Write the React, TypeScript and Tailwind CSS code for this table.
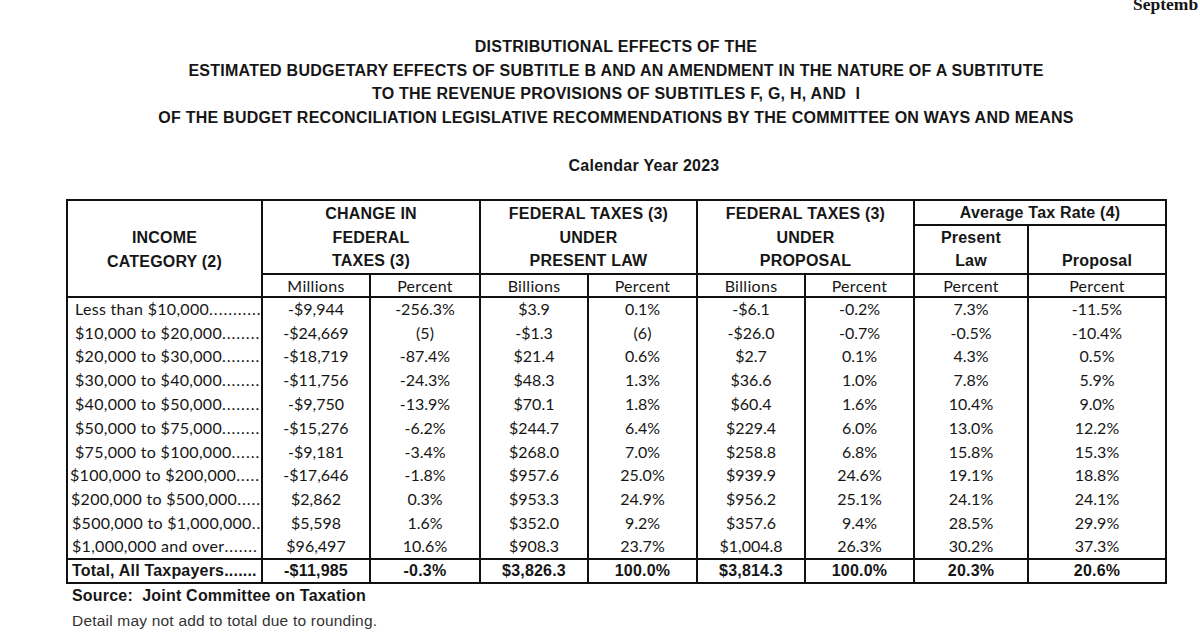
import React from 'react'

const rows: { label: string; dots: string; indent: string; cells: string[] }[] = [
  { label: 'Less than $10,000', dots: '...........', indent: 'pl-[7px]', cells: ['-$9,944', '-256.3%', '$3.9', '0.1%', '-$6.1', '-0.2%', '7.3%', '-11.5%'] },
  { label: '$10,000 to $20,000', dots: '........', indent: 'pl-[7px]', cells: ['-$24,669', '(5)', '-$1.3', '(6)', '-$26.0', '-0.7%', '-0.5%', '-10.4%'] },
  { label: '$20,000 to $30,000', dots: '........', indent: 'pl-[7px]', cells: ['-$18,719', '-87.4%', '$21.4', '0.6%', '$2.7', '0.1%', '4.3%', '0.5%'] },
  { label: '$30,000 to $40,000', dots: '........', indent: 'pl-[7px]', cells: ['-$11,756', '-24.3%', '$48.3', '1.3%', '$36.6', '1.0%', '7.8%', '5.9%'] },
  { label: '$40,000 to $50,000', dots: '........', indent: 'pl-[7px]', cells: ['-$9,750', '-13.9%', '$70.1', '1.8%', '$60.4', '1.6%', '10.4%', '9.0%'] },
  { label: '$50,000 to $75,000', dots: '........', indent: 'pl-[7px]', cells: ['-$15,276', '-6.2%', '$244.7', '6.4%', '$229.4', '6.0%', '13.0%', '12.2%'] },
  { label: '$75,000 to $100,000', dots: '......', indent: 'pl-[7px]', cells: ['-$9,181', '-3.4%', '$268.0', '7.0%', '$258.8', '6.8%', '15.8%', '15.3%'] },
  { label: '$100,000 to $200,000', dots: '.....', indent: 'pl-[2px]', cells: ['-$17,646', '-1.8%', '$957.6', '25.0%', '$939.9', '24.6%', '19.1%', '18.8%'] },
  { label: '$200,000 to $500,000', dots: '.....', indent: 'pl-[3px]', cells: ['$2,862', '0.3%', '$953.3', '24.9%', '$956.2', '25.1%', '24.1%', '24.1%'] },
  { label: '$500,000 to $1,000,000', dots: '..', indent: 'pl-[4px]', cells: ['$5,598', '1.6%', '$352.0', '9.2%', '$357.6', '9.4%', '28.5%', '29.9%'] },
  { label: '$1,000,000 and over', dots: '.......', indent: 'pl-[4px]', cells: ['$96,497', '10.6%', '$908.3', '23.7%', '$1,004.8', '26.3%', '30.2%', '37.3%'] },
]

const total = ['-$11,985', '-0.3%', '$3,826.3', '100.0%', '$3,814.3', '100.0%', '20.3%', '20.6%']

const subHeads = ['Millions', 'Percent', 'Billions', 'Percent', 'Billions', 'Percent', 'Percent', 'Percent']

export default function App() {
  return (
    <div className="w-[1200px] h-[637px] overflow-hidden bg-white text-[#161616] font-['Liberation_Sans',Arial,sans-serif]">
      <div className="h-[12px] pl-[1133px] -mt-[5px] whitespace-nowrap font-['Liberation_Serif',serif] font-bold text-[17.5px] leading-[18px]">
        Septemb
      </div>

      <div className="pl-[32px] pt-[28px] text-center font-bold text-[16px] leading-[23.6px] tracking-[0.25px]">
        <div>DISTRIBUTIONAL EFFECTS OF THE</div>
        <div>ESTIMATED BUDGETARY EFFECTS OF SUBTITLE B AND AN AMENDMENT IN THE NATURE OF A SUBTITUTE</div>
        <div>TO THE REVENUE PROVISIONS OF SUBTITLES F, G, H, AND&nbsp; I</div>
        <div>OF THE BUDGET RECONCILIATION LEGISLATIVE RECOMMENDATIONS BY THE COMMITTEE ON WAYS AND MEANS</div>
      </div>

      <div className="pl-[88px] pt-[25px] text-center font-bold text-[16px] leading-[24px] tracking-[0.25px]">
        Calendar Year 2023
      </div>

      <table className="ml-[66px] mt-[21px] w-[1099px] table-fixed border-collapse">
        <colgroup>
          <col className="w-[195px]" />
          <col className="w-[108px]" />
          <col className="w-[110px]" />
          <col className="w-[108px]" />
          <col className="w-[109px]" />
          <col className="w-[108px]" />
          <col className="w-[109px]" />
          <col className="w-[114px]" />
          <col className="w-[138px]" />
        </colgroup>
        <thead className="font-bold text-[16px] tracking-[0.2px]">
          <tr className="h-[23px]">
            <th rowSpan={3} className="border-2 border-[#111] align-middle font-bold leading-[23.5px] pt-[2px]">
              INCOME
              <br />
              CATEGORY (2)
            </th>
            <th rowSpan={2} colSpan={2} className="border-2 border-[#111] align-top font-bold leading-[23.5px] pt-[1px]">
              CHANGE IN
              <br />
              FEDERAL
              <br />
              TAXES (3)
            </th>
            <th rowSpan={2} colSpan={2} className="border-2 border-[#111] align-top font-bold leading-[23.5px] pt-[1px]">
              FEDERAL TAXES (3)
              <br />
              UNDER
              <br />
              PRESENT LAW
            </th>
            <th rowSpan={2} colSpan={2} className="border-2 border-[#111] align-top font-bold leading-[23.5px] pt-[1px]">
              FEDERAL TAXES (3)
              <br />
              UNDER
              <br />
              PROPOSAL
            </th>
            <th colSpan={2} className="border-2 border-[#111] align-middle font-bold leading-[21px] pt-[1px]">
              Average Tax Rate (4)
            </th>
          </tr>
          <tr className="h-[49px]">
            <th className="border-2 border-[#111] align-top font-bold leading-[23.5px]">
              Present
              <br />
              Law
            </th>
            <th className="border-2 border-[#111] align-bottom font-bold leading-[23.5px]">Proposal</th>
          </tr>
          <tr className="h-[23px] font-['Lato',sans-serif] font-normal text-[16px] tracking-[0.3px]">
            {subHeads.map((s, i) => (
              <th key={i} className="border-2 border-[#111] font-normal leading-[19px]">
                {s}
              </th>
            ))}
          </tr>
        </thead>
        <tbody className="font-['Lato',sans-serif] text-[16px]">
          {rows.map((r) => (
            <tr key={r.label} className="h-[23.8px]">
              <td className={`border-x-2 border-[#111] ${r.indent} whitespace-nowrap overflow-hidden leading-[20px] tracking-[0.3px]`}>
                {r.label}
                <span className="tracking-[1px]">{r.dots}</span>
              </td>
              {r.cells.map((c, i) => (
                <td key={i} className="border-x-2 border-[#111] text-center leading-[20px]">
                  {c}
                </td>
              ))}
            </tr>
          ))}
          <tr className="h-[24px] font-['Liberation_Sans',Arial,sans-serif] font-bold text-[16px] tracking-[0.2px]">
            <td className="border-2 border-[#111] pl-[4px] whitespace-nowrap overflow-hidden leading-[20px]">Total, All Taxpayers.......</td>
            {total.map((c, i) => (
              <td key={i} className="border-2 border-[#111] text-center leading-[20px]">
                {c}
              </td>
            ))}
          </tr>
        </tbody>
      </table>

      <div className="pl-[72px] pt-[1px] font-bold text-[16px] leading-[22px] tracking-[0.2px] whitespace-pre">
        {'Source:  Joint Committee on Taxation'}
      </div>
      <div className="pl-[72px] pt-[3px] text-[15.5px] leading-[22px] text-[#333] tracking-[0.2px]">
        Detail may not add to total due to rounding.
      </div>
    </div>
  )
}
